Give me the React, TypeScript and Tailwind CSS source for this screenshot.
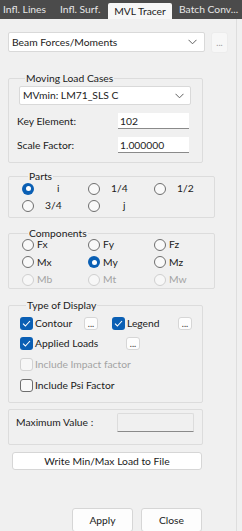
import React from "react";

const font = { fontFamily: 'Lato, "Noto Sans", sans-serif' };

function Chevron() {
    return (
        <svg width="9" height="6" viewBox="0 0 9 6" className="shrink-0">
            <path d="M0.5 0.8 L4.5 4.8 L8.5 0.8" fill="none" stroke="#606060" strokeWidth="1" />
        </svg>
    );
}

function Radio({ checked, disabled }: { checked?: boolean; disabled?: boolean }) {
    if (checked) {
        return (
            <span className="w-[12px] h-[12px] rounded-full bg-[#0a5fb4] flex items-center justify-center shrink-0">
                <span className="w-[5px] h-[5px] rounded-full bg-white" />
            </span>
        );
    }
    return (
        <span
            className={
                disabled
                    ? "w-[12px] h-[12px] rounded-full border border-[#cfcfcf] bg-[#f7f7f7] shrink-0"
                    : "w-[12px] h-[12px] rounded-full border border-[#6e6e6e] bg-[#f9f9f9] shrink-0"
            }
        />
    );
}

function Check({ checked, disabled }: { checked?: boolean; disabled?: boolean }) {
    if (checked) {
        return (
            <span className="w-[13px] h-[13px] rounded-[3px] bg-[#0a5fb4] flex items-center justify-center shrink-0">
                <svg width="9" height="7" viewBox="0 0 9 7">
                    <path d="M1 3.6 L3.4 6 L8 1" fill="none" stroke="white" strokeWidth="1.1" />
                </svg>
            </span>
        );
    }
    return (
        <span
            className={
                disabled
                    ? "w-[13px] h-[13px] rounded-[3px] border border-[#d2d2d2] bg-[#f7f7f7] shrink-0"
                    : "w-[13px] h-[13px] rounded-[3px] border border-[#6e6e6e] bg-[#f9f9f9] shrink-0"
            }
        />
    );
}

function Dots() {
    return (
        <span className="w-[14px] h-[13px] rounded-[3px] border border-[#d6d6d6] bg-[#fdfdfd] flex items-end justify-center text-[9px] leading-[9px] text-[#333] pb-[1px]">
            ...
        </span>
    );
}

function Group({ label, className, children }: { label?: string; className?: string; children: React.ReactNode }) {
    return (
        <fieldset className={"w-[195px] border border-[#dcdcdc] rounded-[2px] " + (className ?? "")}>
            {label && <legend className="ml-[6px] px-[1px] text-[10.3px] leading-[12px] text-[#1b1b1b]">{label}</legend>}
            {children}
        </fieldset>
    );
}

export default function App() {
    return (
        <div style={font} className="w-[242px] h-[531px] bg-[#f0f0f0] overflow-hidden text-[10.3px] leading-[13px] text-[#1b1b1b] flex flex-col">
            {/* tab strip */}
            <div className="h-[19px] bg-[#4b4b4b] flex items-end text-[10.3px] text-[#e6e6e6] whitespace-nowrap shrink-0">
                <span className="pl-[3px] w-[57px] pb-[3px]">Infl. Lines</span>
                <span className="pl-[3px] w-[51px] pb-[3px]">Infl. Surf.</span>
                <span className="h-[16px] w-[64px] bg-[#f7f7f7] text-[#1b1b1b] rounded-t-[2px] flex items-center justify-center">MVL Tracer</span>
                <span className="pl-[7px] pb-[3px]">Batch Conv...</span>
            </div>

            <div className="flex flex-1">
                <div className="w-[237px] border-r border-[#dedede] pl-[8px] flex flex-col">
                    <div className="flex items-start mt-[13px] h-[21px]">
                        <div className="w-[197px] h-[20px] bg-white border border-[#d9d9d9] rounded-[2px] flex items-center pl-[3px] pr-[7px] justify-between">
                            <span>Beam Forces/Moments</span>
                            <Chevron />
                        </div>
                        <span className="ml-[6px] w-[17px] h-[21px] rounded-[3px] bg-[#f7f7f7] border border-[#ececec] flex items-center justify-center text-[9px] text-[#9a9a9a]">
                            ...
                        </span>
                    </div>

                    <Group label="Moving Load Cases" className="mt-[19px] h-[91px] pl-[10px]">
                        <div className="w-[172px] h-[19px] mt-[2px] bg-white border border-[#d9d9d9] rounded-[2px] flex items-center pl-[3px] pr-[6px] justify-between">
                            <span>MVmin: LM71_SLS C</span>
                            <Chevron />
                        </div>
                        <div className="flex items-center mt-[8px] -ml-[2px]">
                            <span className="w-[101px]">Key Element:</span>
                            <span className="w-[71px] h-[16px] bg-white border-b border-[#8a8a8a] pl-[2px] leading-[16px]">102</span>
                        </div>
                        <div className="flex items-center mt-[8px] -ml-[2px]">
                            <span className="w-[101px]">Scale Factor:</span>
                            <span className="w-[71px] h-[16px] bg-white border-b border-[#8a8a8a] pl-[2px] leading-[16px]">1.000000</span>
                        </div>
                    </Group>

                    <Group label="Parts" className="mt-[7px] h-[48px] pl-[13px]">
                        <div className="grid grid-cols-[66px_66px_60px] gap-y-[4px]">
                            <div className="flex items-center h-[13px]"><Radio checked /><span className="ml-[23px]">i</span></div>
                            <div className="flex items-center h-[13px]"><Radio /><span className="ml-[11px]">1/4</span></div>
                            <div className="flex items-center h-[13px]"><Radio /><span className="ml-[11px]">1/2</span></div>
                            <div className="flex items-center h-[13px]"><Radio /><span className="ml-[11px]">3/4</span></div>
                            <div className="flex items-center h-[13px]"><Radio /><span className="ml-[23px]">j</span></div>
                        </div>
                    </Group>

                    <Group label="Components" className="mt-[9px] h-[62px] pl-[13px]">
                        <div className="grid grid-cols-[66px_66px_60px] gap-y-[4.5px] -mt-[1px]">
                            <div className="flex items-center h-[13px]"><Radio /><span className="ml-[3px]">Fx</span></div>
                            <div className="flex items-center h-[13px]"><Radio /><span className="ml-[3px]">Fy</span></div>
                            <div className="flex items-center h-[13px]"><Radio /><span className="ml-[3px]">Fz</span></div>
                            <div className="flex items-center h-[13px]"><Radio /><span className="ml-[3px]">Mx</span></div>
                            <div className="flex items-center h-[13px]"><Radio checked /><span className="ml-[3px]">My</span></div>
                            <div className="flex items-center h-[13px]"><Radio /><span className="ml-[3px]">Mz</span></div>
                            <div className="flex items-center h-[13px] text-[#a3a3a3]"><Radio disabled /><span className="ml-[3px]">Mb</span></div>
                            <div className="flex items-center h-[13px] text-[#a3a3a3]"><Radio disabled /><span className="ml-[3px]">Mt</span></div>
                            <div className="flex items-center h-[13px] text-[#a3a3a3]"><Radio disabled /><span className="ml-[3px]">Mw</span></div>
                        </div>
                    </Group>

                    <Group label="Type of Display" className="mt-[10px] h-[104px] pl-[11px]">
                        <div className="flex flex-col gap-y-[7.7px] mt-[5.5px]">
                            <div className="flex items-center h-[13px]">
                                <Check checked />
                                <span className="ml-[2px] w-[49px]">Contour</span>
                                <Dots />
                                <span className="ml-[14px]"><Check checked /></span>
                                <span className="ml-[2px] w-[51px]">Legend</span>
                                <Dots />
                            </div>
                            <div className="flex items-center h-[13px]">
                                <Check checked />
                                <span className="ml-[2px] w-[91px]">Applied Loads</span>
                                <Dots />
                            </div>
                            <div className="flex items-center h-[13px] text-[#a3a3a3]">
                                <Check disabled />
                                <span className="ml-[2px]">Include Impact factor</span>
                            </div>
                            <div className="flex items-center h-[13px]">
                                <Check />
                                <span className="ml-[2px]">Include Psi Factor</span>
                            </div>
                        </div>
                    </Group>

                    <Group className="mt-[6px] h-[36px] pl-[7px] flex items-center">
                        <div className="flex items-center h-full mt-[3px]">
                            <span className="w-[101px]">Maximum Value :</span>
                            <span className="w-[77px] h-[19px] bg-[#f0f0f0] border border-[#dcdcdc] border-b-[#8a8a8a] rounded-t-[2px]" />
                        </div>
                    </Group>

                    <button className="ml-[4px] mt-[7px] w-[190px] h-[18px] bg-white border border-[#d6d6d6] rounded-[3px] text-[10.3px] leading-[16px]">
                        Write Min/Max Load to File
                    </button>

                    <div className="flex mt-[38px] ml-[64px] gap-x-[8px]">
                        <button className="w-[61px] h-[24px] bg-[#fdfdfd] border border-[#d6d6d6] rounded-[3px] text-[10.3px]">Apply</button>
                        <button className="w-[61px] h-[24px] bg-[#fdfdfd] border border-[#d6d6d6] rounded-[3px] text-[10.3px]">Close</button>
                    </div>
                </div>
                <div className="flex-1" />
            </div>
        </div>
    );
}
